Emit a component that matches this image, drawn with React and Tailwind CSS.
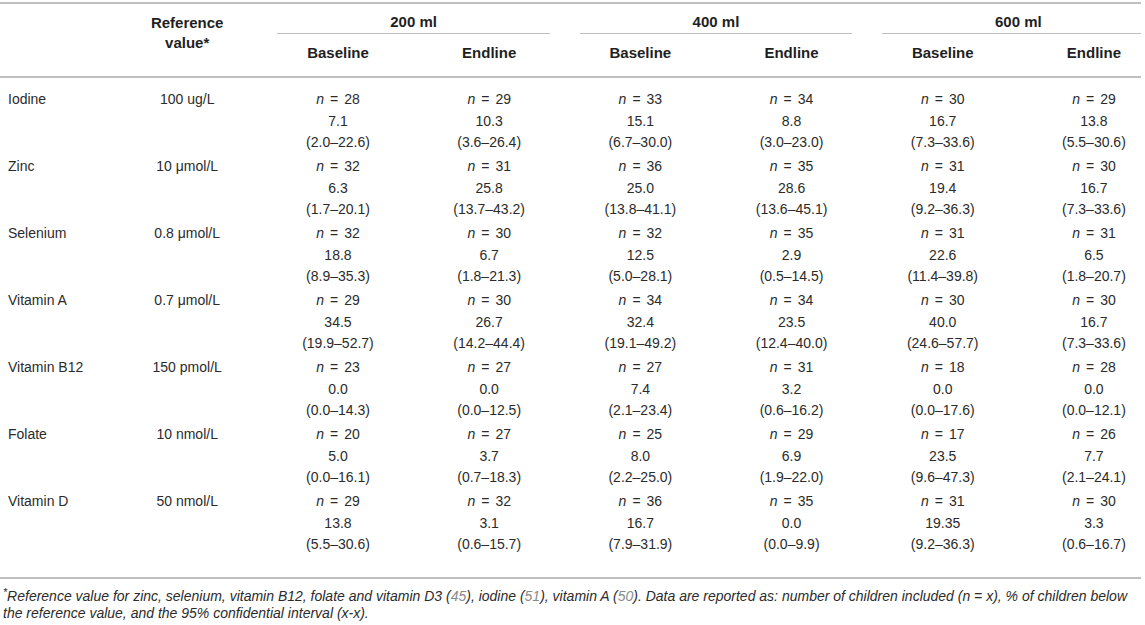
const rows = [
  {
    name: "Iodine",
    ref: "100 ug/L",
    cells: [
      ["28", "7.1", "(2.0–22.6)"],
      ["29", "10.3", "(3.6–26.4)"],
      ["33", "15.1", "(6.7–30.0)"],
      ["34", "8.8", "(3.0–23.0)"],
      ["30", "16.7", "(7.3–33.6)"],
      ["29", "13.8", "(5.5–30.6)"],
    ],
  },
  {
    name: "Zinc",
    ref: "10 μmol/L",
    cells: [
      ["32", "6.3", "(1.7–20.1)"],
      ["31", "25.8", "(13.7–43.2)"],
      ["36", "25.0", "(13.8–41.1)"],
      ["35", "28.6", "(13.6–45.1)"],
      ["31", "19.4", "(9.2–36.3)"],
      ["30", "16.7", "(7.3–33.6)"],
    ],
  },
  {
    name: "Selenium",
    ref: "0.8 μmol/L",
    cells: [
      ["32", "18.8", "(8.9–35.3)"],
      ["30", "6.7", "(1.8–21.3)"],
      ["32", "12.5", "(5.0–28.1)"],
      ["35", "2.9", "(0.5–14.5)"],
      ["31", "22.6", "(11.4–39.8)"],
      ["31", "6.5", "(1.8–20.7)"],
    ],
  },
  {
    name: "Vitamin A",
    ref: "0.7 μmol/L",
    cells: [
      ["29", "34.5", "(19.9–52.7)"],
      ["30", "26.7", "(14.2–44.4)"],
      ["34", "32.4", "(19.1–49.2)"],
      ["34", "23.5", "(12.4–40.0)"],
      ["30", "40.0", "(24.6–57.7)"],
      ["30", "16.7", "(7.3–33.6)"],
    ],
  },
  {
    name: "Vitamin B12",
    ref: "150 pmol/L",
    cells: [
      ["23", "0.0", "(0.0–14.3)"],
      ["27", "0.0", "(0.0–12.5)"],
      ["27", "7.4", "(2.1–23.4)"],
      ["31", "3.2", "(0.6–16.2)"],
      ["18", "0.0", "(0.0–17.6)"],
      ["28", "0.0", "(0.0–12.1)"],
    ],
  },
  {
    name: "Folate",
    ref: "10 nmol/L",
    cells: [
      ["20", "5.0", "(0.0–16.1)"],
      ["27", "3.7", "(0.7–18.3)"],
      ["25", "8.0", "(2.2–25.0)"],
      ["29", "6.9", "(1.9–22.0)"],
      ["17", "23.5", "(9.6–47.3)"],
      ["26", "7.7", "(2.1–24.1)"],
    ],
  },
  {
    name: "Vitamin D",
    ref: "50 nmol/L",
    cells: [
      ["29", "13.8", "(5.5–30.6)"],
      ["32", "3.1", "(0.6–15.7)"],
      ["36", "16.7", "(7.9–31.9)"],
      ["35", "0.0", "(0.0–9.9)"],
      ["31", "19.35", "(9.2–36.3)"],
      ["30", "3.3", "(0.6–16.7)"],
    ],
  },
];

const groups = ["200 ml", "400 ml", "600 ml"];
const cols = "grid grid-cols-[112px_150.4px_repeat(6,151.2px)]";

function Count({ n }) {
  return (
    <div>
      <span className="italic">n</span>
      <span className="mx-[6px]">=</span>
      {n}
    </div>
  );
}

export default function App() {
  return (
    <div
      className="w-[1145px] h-[625px] bg-white text-[#2b2b2b] text-[14px] overflow-hidden"
      style={{ fontFamily: '"Liberation Sans", Arial, sans-serif' }}
    >
      <div className="w-[1141px] overflow-hidden">
        <div className="w-[1170px]">
          {/* Header */}
          <div className="mt-[2px] border-t-2 border-b-2 border-[#bfbfbf] font-bold text-[15px] text-[#1f1f1f]">
            <div className={cols}>
              <div className="row-span-2" />
              <div className="row-span-2 pt-[9px] leading-[20px] text-center">
                Reference
                <br />
                value*
              </div>
              {groups.map((g) => (
                <div key={g} className="col-span-2 pt-[8px] text-center">
                  <div className="leading-[20px]">{g}</div>
                  <div className="mx-[15px] mt-[1px] border-b border-[#bfbfbf]" />
                </div>
              ))}
              {groups.map((g) => (
                <div key={g + "-sub"} className="col-span-2 grid grid-cols-2 pt-[9px] pb-[13px] leading-[20px] text-center">
                  <div>Baseline</div>
                  <div>Endline</div>
                </div>
              ))}
            </div>
          </div>

          {/* Body */}
          <div className="pt-[10px] pb-[20px] border-b-2 border-[#bfbfbf]">
            {rows.map((row) => (
              <div key={row.name} className={cols + " py-[1.25px] leading-[21.5px]"}>
                <div className="pl-[8px]">{row.name}</div>
                <div className="text-center">{row.ref}</div>
                {row.cells.map((c, i) => (
                  <div key={i} className="text-center">
                    <Count n={c[0]} />
                    <div>{c[1]}</div>
                    <div>{c[2]}</div>
                  </div>
                ))}
              </div>
            ))}
          </div>
        </div>
      </div>

      {/* Footnote */}
      <p className="pl-[3px] pt-[9px] text-[14px] leading-[17px] italic text-[#2b2b2b]">
        <sup>*</sup>Reference value for zinc, selenium, vitamin B12, folate and vitamin D3 (
        <span className="text-[#8a8a8a]">45</span>), iodine (<span className="text-[#8a8a8a]">51</span>), vitamin A (
        <span className="text-[#8a8a8a]">50</span>). Data are reported as: number of children included (n = x), % of
        children below the reference value, and the 95% confidential interval (x-x).
      </p>
    </div>
  );
}
